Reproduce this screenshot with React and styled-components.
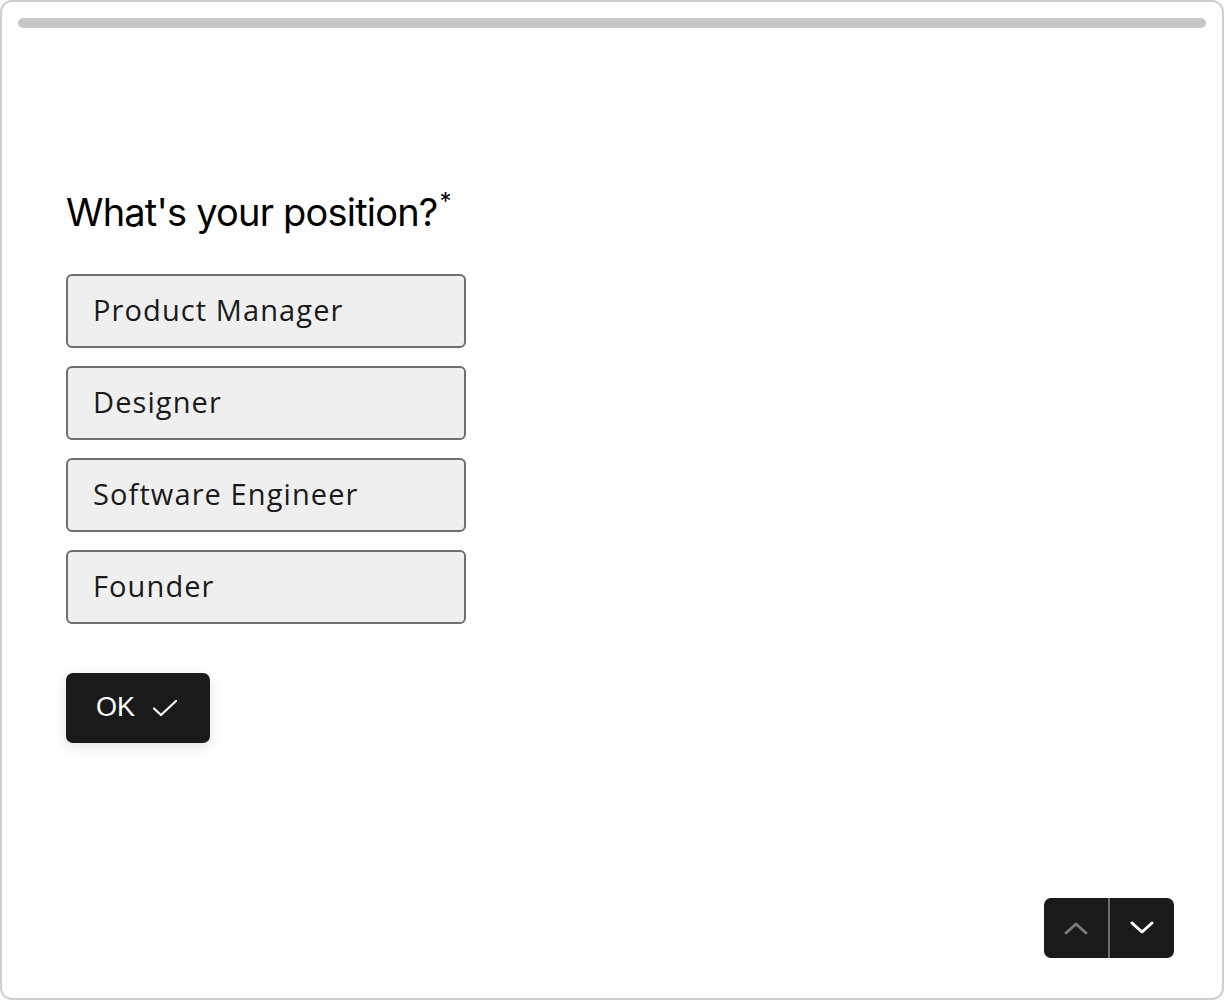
import React from "react";
import styled, { createGlobalStyle } from "styled-components";

const GlobalStyle = createGlobalStyle`
  html, body {
    margin: 0;
    padding: 0;
    background: #ffffff;
  }
  * {
    box-sizing: border-box;
  }
`;

const Frame = styled.div`
  width: 1224px;
  height: 1000px;
  border: 2px solid #cfcfcf;
  border-radius: 12px;
  background: #ffffff;
  display: flex;
  flex-direction: column;
  padding: 16px 16px 40px 16px;
  position: relative;
`;

const Progress = styled.div`
  height: 10px;
  border-radius: 5px;
  background: #c6c6c6;
`;

const Content = styled.div`
  flex: 1;
  display: flex;
  flex-direction: column;
  align-items: flex-start;
  padding: 152px 0 0 48px;
`;

const Question = styled.h1`
  margin: 0 0 38px 0;
  font-family: Inter, "Liberation Sans", sans-serif;
  font-weight: 400;
  font-size: 38px;
  letter-spacing: -0.8px;
  line-height: 48px;
  color: #000000;

  sup {
    font-size: 24px;
    position: relative;
    top: -2px;
    margin-left: 2px;
  }
`;

const Options = styled.div`
  display: flex;
  flex-direction: column;
  gap: 18px;
`;

const Option = styled.button`
  width: 400px;
  height: 74px;
  display: flex;
  align-items: center;
  padding: 0 0 2px 25px;
  background: #efefef;
  border: 2px solid #6f6f6f;
  border-radius: 6px;
  font-family: "Open Sans", sans-serif;
  font-size: 29px;
  letter-spacing: 1.1px;
  color: #1a1a1a;
  text-align: left;
  cursor: pointer;
`;

const OkButton = styled.button`
  margin-top: 49px;
  width: 144px;
  height: 70px;
  display: flex;
  align-items: center;
  gap: 17px;
  padding: 0 0 0 30px;
  background: #1a1a1a;
  border: none;
  border-radius: 7px;
  box-shadow: 0 4px 14px rgba(0, 0, 0, 0.12);
  font-family: "Liberation Sans", Arial, sans-serif;
  font-size: 27px;
  color: #ffffff;
  cursor: pointer;
`;

const NavGroup = styled.div`
  align-self: flex-end;
  margin-right: 32px;
  display: flex;
  width: 130px;
  height: 60px;
  background: #1a1a1a;
  border-radius: 7px;
  overflow: hidden;
`;

const NavButton = styled.button`
  flex: 1;
  display: flex;
  align-items: center;
  justify-content: center;
  background: transparent;
  border: none;
  padding: 0;
  color: ${(p) => (p.$disabled ? "#7a7a7a" : "#ffffff")};
  cursor: pointer;
`;

const Divider = styled.div`
  width: 2px;
  background: #6e6e6e;
`;

const Check = () => (
  <svg width="26" height="20" viewBox="0 0 26 20" fill="none">
    <path d="M2 10.5 L9 17 L24 3" stroke="#ffffff" strokeWidth="2.2" strokeLinecap="round" strokeLinejoin="round" />
  </svg>
);

const Chevron = ({ up }) => (
  <svg width="24" height="16" viewBox="0 0 24 16" fill="none">
    <path
      d={up ? "M2 13 L12 4 L22 13" : "M2 3 L12 12 L22 3"}
      stroke="currentColor"
      strokeWidth="3"
      strokeLinecap="round"
      strokeLinejoin="round"
    />
  </svg>
);

const choices = ["Product Manager", "Designer", "Software Engineer", "Founder"];

export default function App() {
  return (
    <>
      <GlobalStyle />
      <Frame>
        <Progress />
        <Content>
          <Question>
            What's your position?<sup>*</sup>
          </Question>
          <Options>
            {choices.map((c) => (
              <Option key={c}>{c}</Option>
            ))}
          </Options>
          <OkButton>
            OK <Check />
          </OkButton>
        </Content>
        <NavGroup>
          <NavButton $disabled>
            <Chevron up />
          </NavButton>
          <Divider />
          <NavButton>
            <Chevron />
          </NavButton>
        </NavGroup>
      </Frame>
    </>
  );
}
